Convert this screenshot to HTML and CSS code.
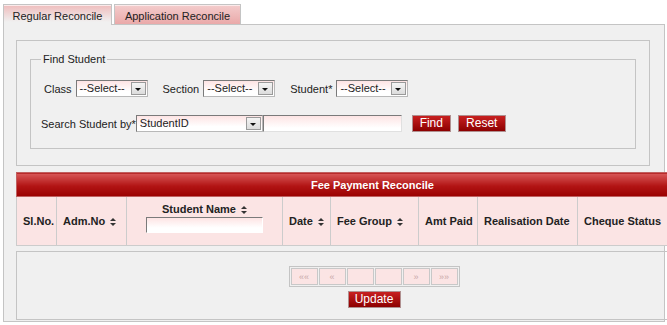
FILE: index.html
```html
<!DOCTYPE html>
<html>
  <head>
    <title>Fee Reconcile</title>
    <link rel="stylesheet" href="styles.css">
  </head>
  <body>
    <div class="tabs">
      <div class="tab active">Regular Reconcile</div>
      <div class="tab">Application Reconcile</div>
    </div>

    <div class="panel">
      <!-- Search block -->
      <div class="search-box">
        <fieldset class="find">
          <legend>Find Student</legend>
          <div class="row row-top">
            <label>Class</label>
            <span class="select w-small"><span class="val">--Select--</span><span class="arrow"></span></span>
            <label class="lbl-gap">Section</label>
            <span class="select w-small"><span class="val">--Select--</span><span class="arrow"></span></span>
            <label class="lbl-gap">Student*</label>
            <span class="select w-small"><span class="val">--Select--</span><span class="arrow"></span></span>
          </div>
          <div class="row">
            <label class="by">Search Student by*</label>
            <span class="select w-wide"><span class="val">StudentID</span><span class="arrow"></span></span>
            <input type="text" class="text-in">
            <button class="btn btn-find">Find</button>
            <button class="btn btn-reset">Reset</button>
          </div>
        </fieldset>
      </div>

      <!-- Result grid -->
      <table class="grid">
        <colgroup>
          <col style="width:40px">
          <col style="width:70px">
          <col style="width:156px">
          <col style="width:48px">
          <col style="width:88px">
          <col style="width:59px">
          <col style="width:100px">
          <col style="width:110px">
        </colgroup>
        <thead>
          <tr><th colspan="8" class="caption">Fee Payment Reconcile</th></tr>
          <tr class="heads">
            <th>Sl.No.</th>
            <th>Adm.No <span class="sort"></span></th>
            <th class="name-col">Student Name <span class="sort"></span><br><input type="text" class="name-in"></th>
            <th>Date <span class="sort"></span></th>
            <th>Fee Group <span class="sort"></span></th>
            <th>Amt Paid</th>
            <th>Realisation Date</th>
            <th>Cheque Status</th>
          </tr>
        </thead>
      </table>

      <div class="pager-box">
        <div class="pager">
          <span class="pg">&laquo;&laquo;</span>
          <span class="pg">&laquo;</span>
          <span class="pg"></span>
          <span class="pg"></span>
          <span class="pg">&raquo;</span>
          <span class="pg">&raquo;&raquo;</span>
        </div>
        <button class="btn btn-update">Update</button>
      </div>
    </div>
  </body>
</html>
```

FILE: styles.css
```css
body {
  margin: 0;
  font-family: "Liberation Sans", Arial, sans-serif;
  font-size: 11px;
  color: #222;
  background: #fff;
  overflow: hidden;
}

/* Tabs */
.tabs {
  display: flex;
  gap: 2px;
  margin: 4px 0 0 3px;
  height: 20px;
}

.tab {
  height: 20px;
  line-height: 22px;
  padding: 0;
  border: 1px solid #c4c4c4;
  border-bottom: none;
  box-sizing: border-box;
  background: linear-gradient(#f3cccc, #eaa9a9);
  box-shadow: inset 0 1px 0 #fbeaea;
  font-size: 11px;
  color: #222;
  white-space: nowrap;
  text-align: center;
  position: relative;
}

.tab.active {
  width: 109px;
  height: 21px;
  background: linear-gradient(#efbcbc, #f0f0f0 85%);
  z-index: 1;
}

.tab:not(.active) {
  width: 127px;
}

/* Main panel */
.panel {
  margin-left: 3px;
  width: 662px;
  height: 298px;
  box-sizing: border-box;
  border: 1px solid #c4c4c4;
  background: #f0f0f0;
  padding: 15px 0 0 12px;
}

.search-box {
  width: 634px;
  height: 126px;
  box-sizing: border-box;
  border: 1px solid #c4c4c4;
  padding: 11px 0 0 13px;
}

.find {
  margin: 0;
  width: 606px;
  height: 97px;
  box-sizing: border-box;
  border: 1px solid #c4c4c4;
  padding: 14px 0 0 10px;
}

.find legend {
  padding: 0 2px;
  font-size: 11px;
  line-height: 14px;
}

.row {
  display: flex;
  align-items: center;
  height: 17px;
}

.row-top {
  margin-left: 3px;
  margin-bottom: 18px;
}

.row label {
  margin-right: 4px;
}

.row .lbl-gap {
  margin-left: 15px;
}

.row .by {
  margin-right: 0;
}

/* Fake select boxes */
.select {
  display: flex;
  height: 17px;
  box-sizing: border-box;
  border: 1px solid #7a7a7a;
  border-right-color: #b8b8b8;
  border-bottom-color: #b8b8b8;
  background: linear-gradient(#fde4e4, #fff 70%);
}

.select .val {
  flex: 1;
  padding-left: 3px;
  line-height: 15px;
}

.select .arrow {
  width: 15px;
  margin: 1px;
  box-sizing: border-box;
  border: 1px solid #9a9a9a;
  background: linear-gradient(#f4f4f4, #dcdcdc);
  position: relative;
}

.select .arrow::after {
  content: "";
  position: absolute;
  left: 3px;
  top: 5px;
  border-left: 3px solid transparent;
  border-right: 3px solid transparent;
  border-top: 3px solid #111;
}

.w-small {
  width: 72px;
}

.w-wide {
  width: 127px;
}

.text-in {
  width: 139px;
  height: 17px;
  box-sizing: border-box;
  margin: 0;
  border: 1px solid #7a7a7a;
  border-right-color: #e0e0e0;
  border-bottom-color: #e0e0e0;
  background: linear-gradient(#fde4e4, #fff 80%);
}

/* Buttons */
.btn {
  height: 17px;
  box-sizing: border-box;
  padding: 0;
  border: 1px solid #b09090;
  background: linear-gradient(#c82020, #8c0000);
  color: #fff;
  font-family: "Liberation Sans", Arial, sans-serif;
  font-size: 12px;
  line-height: 15px;
}

.btn-find {
  width: 39px;
  margin-left: 10px;
}

.btn-reset {
  width: 48px;
  margin-left: 7px;
}

/* Grid */
.grid {
  margin-top: 6px;
  width: 671px;
  table-layout: fixed;
  border-collapse: collapse;
}

.grid .caption {
  height: 23px;
  padding: 0 0 0 294px;
  background: linear-gradient(#d85858, #b21414 55%, #9a0000);
  color: #fff;
  font-weight: bold;
  text-align: left;
  border: 1px solid #c06060;
}

.grid .heads th {
  height: 42px;
  padding: 0 0 0 6px;
  background: #fbe4e4;
  border: 1px solid #cccccc;
  font-weight: bold;
  color: #222;
  text-align: left;
  white-space: nowrap;
}

.grid .heads .name-col {
  text-align: center;
  padding: 6px 0 0 0;
  vertical-align: top;
}

.name-in {
  width: 117px;
  height: 16px;
  box-sizing: border-box;
  margin: 2px 0 0 0;
  border: 1px solid #7a7a7a;
  border-right-color: #fff;
  border-bottom-color: #fff;
  background: linear-gradient(#fde4e4, #fff 70%);
}

.sort {
  display: inline-block;
  width: 6px;
  height: 8px;
  margin-left: 2px;
  vertical-align: -1px;
  position: relative;
}

.sort::before,
.sort::after {
  content: "";
  position: absolute;
  left: 0;
  border-left: 3px solid transparent;
  border-right: 3px solid transparent;
}

.sort::before {
  top: 0;
  border-bottom: 3px solid #333;
}

.sort::after {
  bottom: 0;
  border-top: 3px solid #333;
}

/* Pager */
.pager-box {
  margin-top: 5px;
  width: 671px;
  height: 69px;
  box-sizing: border-box;
  border: 1px solid #c4c4c4;
  display: flex;
  flex-direction: column;
  align-items: center;
  padding: 14px 0 0 45px;
}

.pager {
  display: flex;
  gap: 1px;
  padding: 1px;
  border: 1px solid #c4c4c4;
}

.pg {
  width: 27px;
  height: 17px;
  box-sizing: border-box;
  border: 1px solid #c8c8c8;
  background: #fbe4e4;
  color: #c8a8a8;
  font-size: 9px;
  line-height: 16px;
  text-align: center;
}

.btn-update {
  margin-top: 4px;
  width: 53px;
  height: 17px;
}
```
